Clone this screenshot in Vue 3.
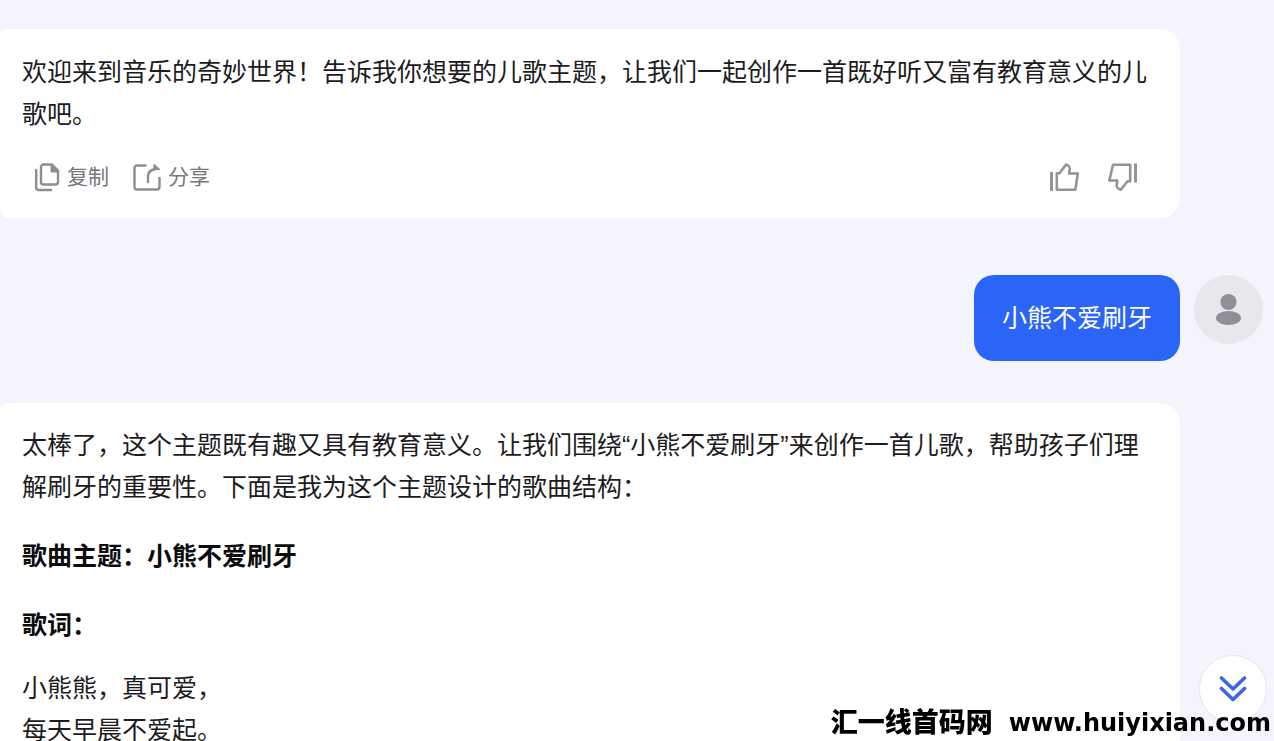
<script setup>
const lyrics = ['小熊熊，真可爱，', '每天早晨不爱起。']
</script>

<template>
  <main class="chat">
    <section class="row">
      <article class="card">
        <p>欢迎来到音乐的奇妙世界！告诉我你想要的儿歌主题，让我们一起创作一首既好听又富有教育意义的儿歌吧。</p>
        <footer class="actions">
          <button type="button" class="action">
            <svg width="26" height="30" viewBox="0 0 26 30" fill="none" stroke="currentColor" stroke-width="2.4" stroke-linecap="round" stroke-linejoin="round">
              <path d="M9.500 2.500H18l6 6V20a2.500 2.500 0 0 1-2.500 2.500h-12A2.500 2.500 0 0 1 7 20V5a2.500 2.500 0 0 1 2.500-2.500Z" />
              <path d="M17 2.500v7.500h7V8.500l-6-6Z" fill="currentColor" stroke-width="1" />
              <path d="M2.200 8v17.500A2.500 2.500 0 0 0 4.700 28H17" />
            </svg>
            <span>复制</span>
          </button>
          <button type="button" class="action">
            <svg width="28" height="28" viewBox="0 0 28 28" fill="none" stroke="currentColor" stroke-width="2.4" stroke-linecap="round" stroke-linejoin="round">
              <path d="M12.500 2.500H4A2.500 2.500 0 0 0 1.500 5v19A2.500 2.500 0 0 0 4 26.500h20a2.500 2.500 0 0 0 2.500-2.500v-9" />
              <path d="M15 19v-5.500c0-4.500 2.500-7 8-7.500" />
              <path d="M21 1.500 26.500 6.500H21Z" fill="currentColor" stroke-width="1.200" />
            </svg>
            <span>分享</span>
          </button>
          <button type="button" class="vote first" aria-label="赞">
            <svg width="30" height="30" viewBox="0 0 30 30" fill="none" stroke="currentColor" stroke-width="2.6" stroke-linejoin="round">
              <path d="M1.500 10v19" stroke-width="3" />
              <path d="M6.800 27.700V11.200H9.500L16 2.600C18 3 20 5 19.800 7L19 11.500H27.800L25.300 27.700Z" />
            </svg>
          </button>
          <button type="button" class="vote" aria-label="踩">
            <svg width="30" height="30" viewBox="0 0 30 30" fill="none" stroke="currentColor" stroke-width="2.6" stroke-linejoin="round">
              <path d="M27.500 1.500v19" stroke-width="3" />
              <path d="M22.200 2.800V19.200H19.500L12.800 27.700C10.300 27 8.300 25 8.600 23L9.300 18.500H1.300L5 2.800Z" />
            </svg>
          </button>
        </footer>
      </article>
    </section>

    <section class="row user">
      <p class="bubble">小熊不爱刷牙</p>
      <span class="avatar">
        <svg width="69" height="69" viewBox="0 0 69 69" fill="currentColor" aria-hidden="true">
          <circle cx="34.500" cy="27" r="8" />
          <ellipse cx="34.500" cy="43" rx="12.500" ry="7" />
        </svg>
      </span>
    </section>

    <section class="row">
      <article class="card answer">
        <p>太棒了，这个主题既有趣又具有教育意义。让我们围绕“小熊不爱刷牙”来创作一首儿歌，帮助孩子们理解刷牙的重要性。下面是我为这个主题设计的歌曲结构：</p>
        <h2>歌曲主题：小熊不爱刷牙</h2>
        <h2>歌词：</h2>
        <div class="lyrics">
          <p v-for="line in lyrics" :key="line">{{ line }}</p>
        </div>
      </article>
    </section>

    <button type="button" class="to-bottom" aria-label="滚动到底部">
      <svg width="28" height="28" viewBox="0 0 28 28" fill="none" stroke="currentColor" stroke-width="3.6" stroke-linecap="round" stroke-linejoin="round">
        <path d="M2.500 3 14 14 25.500 3M2.500 13.500 14 24.500 25.500 13.500" />
      </svg>
    </button>
    <div class="site">
      <span class="site-name">汇一线首码网</span>
      <span class="site-url">www.huiyixian.com</span>
    </div>
  </main>
</template>

<style>
body {
  margin: 0;
  background: #f3f4fc;
}
</style>

<style scoped>
.chat {
  box-sizing: border-box;
  height: 100vh;
  overflow: hidden;
  padding-top: 29px;
  background: #f3f4fc;
  color: #1c1c1e;
  font-family: "Liberation Sans", "Noto Sans CJK SC", sans-serif;
  font-size: 25px;
  line-height: 42px;
}
p,
h2 {
  margin: 0;
}
.row {
  padding-right: 94px;
}
.card {
  padding: 22px 22px 20px;
  border-radius: 8px 20px 20px 8px;
  background: #fff;
}
.card.answer {
  padding-top: 21px;
}
.actions {
  display: flex;
  align-items: center;
  margin-top: 21px;
  padding: 0 20px 0 12px;
}
button {
  display: flex;
  align-items: center;
  padding: 0;
  border: 0;
  background: none;
  font: inherit;
  cursor: pointer;
}
.action {
  gap: 7px;
  margin-right: 24px;
  color: #8b8e91;
  font-size: 21px;
}
.action span {
  color: #74787c;
}
.vote {
  color: #929496;
}
.vote.first {
  margin-left: auto;
  margin-right: 28px;
}
.user {
  display: flex;
  justify-content: flex-end;
  align-items: flex-start;
  gap: 14px;
  margin: 57px 0 42px;
  padding-right: 11px;
}
.bubble {
  padding: 22px 28px;
  border-radius: 20px;
  background: #2b65f8;
  color: #fff;
}
.avatar {
  display: flex;
  border-radius: 50%;
  background: #e8e8ec;
  color: #8e8f97;
}
h2 {
  margin-top: 27px;
  color: #0c0c0d;
  font-size: 25px;
  font-weight: 700;
}
.lyrics {
  margin-top: 21px;
}
.to-bottom {
  position: fixed;
  right: 7px;
  bottom: 18px;
  justify-content: center;
  width: 68px;
  height: 68px;
  border: 1px solid #e6e7ee;
  border-radius: 50%;
  background: #fff;
  color: #3b68e0;
}
.site {
  position: fixed;
  right: 3px;
  bottom: 0;
  display: flex;
  align-items: center;
  gap: 16px;
  color: #000;
  font-weight: 900;
  line-height: 36px;
}
.site-name {
  font-size: 27px;
}
.site-url {
  font-family: "DejaVu Sans", sans-serif;
  font-size: 24px;
}
</style>
